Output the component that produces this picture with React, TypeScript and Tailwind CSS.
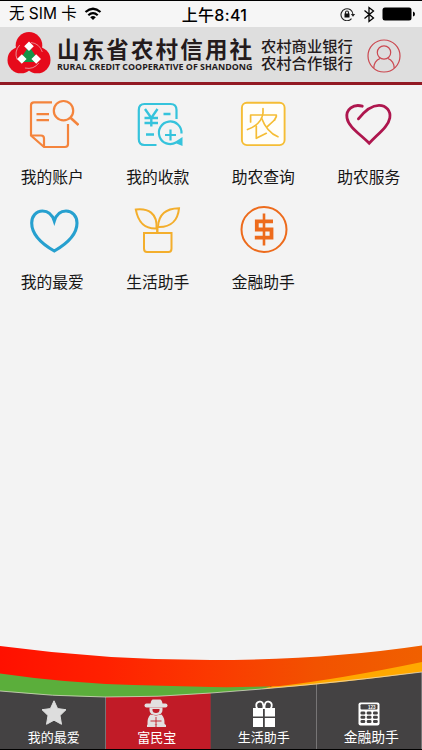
import { useState, type ReactNode } from "react";
import clsx from "clsx";

const menuItems: { label: string; icon: ReactNode }[] = [
  { label: "我的账户", icon: <AccountIcon /> },
  { label: "我的收款", icon: <ReceiptIcon /> },
  { label: "助农查询", icon: <FarmQueryIcon /> },
  { label: "助农服务", icon: <FarmServiceIcon /> },
  { label: "我的最爱", icon: <HeartIcon /> },
  { label: "生活助手", icon: <PlantIcon /> },
  { label: "金融助手", icon: <DollarIcon /> },
];

const tabs: { label: string; icon: ReactNode; style: string }[] = [
  { label: "我的最爱", icon: <StarIcon />, style: "pl-[3px] text-[13px]" },
  { label: "富民宝", icon: <FarmerIcon />, style: "pr-[2px] text-[13px]" },
  { label: "生活助手", icon: <GiftIcon />, style: "pl-[1px] text-[13px]" },
  { label: "金融助手", icon: <CalculatorIcon />, style: "pl-[5px] text-[13.800px]" },
];

function AccountIcon() {
  return (
    <svg viewBox="0 0 52 52" className="w-[52px] h-[52px]" fill="none" stroke="#f4843c" strokeWidth="2.200">
      <path d="M25 3.300H7Q4 3.300 4 6.300V36.500L17 48H38Q41 48 41 45V25" />
      <path d="M4 36.500H14Q17 36.500 17 39.500V48" />
      <path d="M9.500 15.200H22M9.500 21.200H22" />
      <circle cx="36.500" cy="11.700" r="9.700" />
      <path d="M43.500 18.700L51.500 26" strokeWidth="2.600" />
    </svg>
  );
}

function ReceiptIcon() {
  return (
    <svg viewBox="0 0 52 52" className="w-[52px] h-[52px]" fill="none" stroke="#35c3dc" strokeWidth="2.200">
      <path d="M24.500 46H12.500Q6.800 46 6.800 40V11Q6.800 5 12.500 5H38.500Q44.500 5 44.500 11V20" />
      <path d="M13 10L19.300 19L25.500 10M12.500 19H26M12.500 24H26M19.300 19V27.500" strokeWidth="2.400" />
      <path d="M31.500 15H38.500M14 35.500H22" strokeWidth="2.400" />
      <path d="M44 43.500A11.300 11.300 0 1 1 49.500 34.500" />
      <path d="M38.500 30.500V41.500M33 36H44" />
      <path d="M50.500 38V47L42 43.500Z" fill="#35c3dc" stroke="none" />
    </svg>
  );
}

function FarmQueryIcon() {
  return (
    <svg viewBox="0 0 52 52" className="w-[52px] h-[52px]" fill="none" stroke="#f5bd35" strokeWidth="1.900">
      <rect x="3.900" y="3.800" width="42.700" height="42.300" rx="5" fill="#fffefa" />
      <g strokeWidth="1.700" strokeLinecap="round" strokeLinejoin="round">
        <path d="M25 9.500V14Q23.500 25.500 9.500 30.500" />
        <path d="M12.600 23V16H38.300V17.500L36.500 21" />
        <path d="M18.300 27V39.300L28.300 34.300" />
        <path d="M23.500 19Q29 33.500 40 37.700" />
        <path d="M36.500 21L29.300 27.700" />
      </g>
    </svg>
  );
}

function FarmServiceIcon() {
  return (
    <svg viewBox="0 0 52 52" className="w-[52px] h-[52px]" fill="none" stroke="#ae164e" strokeWidth="2.800" strokeLinecap="round">
      <path d="M15.400 19.800C20 14 28 6.300 36 6.300C43.500 6.300 48 12.500 46.800 19C45.500 27 36 34 26.200 44.300C17 35 5.500 28 4 19C2.500 10.500 10.500 4.500 19.300 7.200" />
    </svg>
  );
}

function HeartIcon() {
  return (
    <svg viewBox="0 0 52 52" className="w-[52px] h-[52px]" fill="none" stroke="#26a0cf" strokeWidth="3.100">
      <path d="M27.300 17C25 10 21 7 15.500 7C9 7 4.700 12.500 4.700 19C4.700 31 15 40 27.300 47C39.500 40 50 31 50 19C50 12.500 45.500 7 39 7C33.500 7 29.500 10 27.300 17Z" />
    </svg>
  );
}

function PlantIcon() {
  return (
    <svg viewBox="0 0 52 52" className="w-[52px] h-[52px]" fill="none" stroke="#f3ae2c" strokeWidth="2">
      <path d="M24.500 24.500C11 25 6 17 3.800 5.500C16 4 25.500 9 24.500 24.500Z" />
      <path d="M26 23C26.500 10 34 4.500 47 4.300C46 15 40 23.500 26 23Z" />
      <path d="M25.300 23V29.500" strokeWidth="2.400" />
      <path d="M12 29H39.500V44.500Q39.500 48 36.500 48H15Q12 48 12 44.500Z" />
    </svg>
  );
}

function DollarIcon() {
  return (
    <svg viewBox="0 0 52 52" className="w-[52px] h-[52px]" fill="none" stroke="#ed6b1c">
      <circle cx="26" cy="25.500" r="22.500" strokeWidth="2" />
      <path d="M35 17.300H18.800V25.500H33.500V33.700H16.800" strokeWidth="3.800" />
      <path d="M26 9.500V41.500" strokeWidth="2.600" />
    </svg>
  );
}

function StarIcon() {
  return (
    <svg viewBox="0 0 28 28" className="ml-[3px] w-7 h-7" fill="#ddd" stroke="#ddd" strokeWidth="1" strokeLinejoin="round">
      <path d="M14 0.800L17.600 8.600L26 9.700L20 15.500L21.500 24.300L14 20.200L6.500 24.300L8 15.500L2 9.700L10.400 8.600Z" />
    </svg>
  );
}

function FarmerIcon() {
  return (
    <svg viewBox="0 0 28 30" className="mr-[3px] w-7 h-[30px]" fill="#e3e0e0">
      <path d="M8.500 6Q9 1.500 11 1.500H18Q20 1.500 20.500 6Z" />
      <rect x="2.500" y="5.500" width="23" height="4" rx="2" />
      <path fillRule="evenodd" d="M7.500 9.500H20.500V12Q20.500 17 14 17Q7.500 17 7.500 12ZM10.500 11V12.500Q11 15 14 15Q17 15 17.500 12.500V11Z" />
      <path d="M8.500 16.500L14 17.500L19.500 16.500Q23 20 22.500 26.500H5.500Q5 20 8.500 16.500Z" />
      <path d="M5 27Q7 24 13.500 26.500V29H5ZM14.500 26.500Q21 24 24 27V29H14.500Z" />
      <path d="M14 19V27M8.500 23H19.500" stroke="#c11b27" strokeWidth="0.900" />
    </svg>
  );
}

function GiftIcon() {
  return (
    <svg viewBox="0 0 28 28" className="ml-[2px] w-7 h-7" fill="#fff">
      <path d="M3 8H13V16.500H3ZM14.800 8H25V16.500H14.800ZM3 18H13V27H3ZM14.800 18H25V27H14.800Z" />
      <path d="M13.300 9C14 3 12 1.200 9.500 1.700C5.500 2.700 5.500 6 7.500 9M14.700 9C14 3 16 1.200 18.500 1.700C22.500 2.700 22.500 6 20.500 9" fill="none" stroke="#fff" strokeWidth="1.800" />
    </svg>
  );
}

function CalculatorIcon() {
  return (
    <svg viewBox="0 0 28 28" className="ml-[1px] w-7 h-7">
      <rect x="3.500" y="2.500" width="21" height="23" rx="2" fill="#fff" />
      <rect x="5.500" y="4.200" width="17" height="5.200" rx="1" fill="#444243" />
      <text x="13" y="8.500" fill="#fff" fontSize="4.500" fontWeight="700" fontFamily="Liberation Sans, sans-serif">123</text>
      <g fill="#444243">
        {[11.5, 15.7, 20].map((y) =>
          [5.5, 11.7, 18].map((x) => <rect key={`${x}-${y}`} x={x} y={y} width="4.800" height="3" rx="1.300" />)
        )}
      </g>
    </svg>
  );
}

// three interlocking petals, each one separated by the same curve turned 120deg
function BankLogo() {
  return (
    <svg viewBox="0 0 44 43" className="w-11 h-[43px] shrink-0">
      <g fill="#e60a1b">
        <circle cx="22" cy="14.300" r="13.300" />
        <circle cx="13.800" cy="29" r="13.300" />
        <circle cx="30.200" cy="29" r="13.300" />
      </g>
      <g fill="none" stroke="#eadede" strokeOpacity="0.800" strokeWidth="0.700">
        {[0, 120, 240].map((angle) => (
          <path key={angle} d="M24 11.500Q32.500 12.500 35.300 21" transform={`rotate(${angle} 22 24)`} />
        ))}
      </g>
      <path d="M22 15L30 27L28 31H16L14 27Z" fill="#149548" />
      <path d="M22 10.500L26.800 15.300L22 20.100L17.200 15.300ZM14.800 23.200L19.600 28L14.800 32.800L10 28ZM29.200 23.200L34 28L29.200 32.800L24.400 28Z" fill="#fff" />
    </svg>
  );
}

function StatusBar() {
  return (
    <div className="grid grid-cols-3 items-center h-[27px] border-t border-black bg-[#f6f6f6] font-['Inter','Noto_Sans_CJK_SC',sans-serif] text-black">
      <div className="flex items-center gap-[7px] pl-[9px] text-[15.500px] whitespace-nowrap">
        <span className="w-[68px]">无 SIM 卡</span>
        <svg viewBox="0 0 18 14" className="w-[18px] h-[14px]" fill="none" stroke="#000" strokeWidth="2.200">
          <path d="M1.500 5Q9 -1.500 16.500 5M4.300 8.300Q9 4 13.700 8.300" />
          <path d="M6.200 10.200Q9 8 11.800 10.200L9 13Z" fill="#000" stroke="none" />
        </svg>
      </div>
      <div className="pl-[7px] pt-[2px] text-center text-[16px] font-medium tracking-[0.300px] whitespace-nowrap">上午8:41</div>
      <div className="flex items-center justify-end gap-[7px] pr-[7px]">
        <svg viewBox="0 0 16 14" className="w-4 h-[14px]" fill="none" stroke="#222" strokeWidth="1.100">
          <path d="M11.500 11.700A6 6 0 1 1 13 7.500" />
          <path d="M10.800 7H15.200L13 9.800Z" fill="#222" stroke="none" />
          <path d="M5.500 7V5.500A1.500 1.500 0 0 1 8.500 5.500V7" />
          <rect x="4.500" y="6.500" width="5" height="4" fill="#111" stroke="none" />
        </svg>
        <svg viewBox="0 0 12 17" className="w-3 h-[17px]" fill="none" stroke="#000" strokeWidth="1.300">
          <path d="M1.500 4.500L10.500 12L6 15.500V1.500L10.500 5L1.500 12.500" />
        </svg>
        <svg viewBox="0 0 33 14" className="w-[33px] h-[14px]">
          <rect x="0.500" y="0.500" width="29" height="13" rx="2.500" fill="#000" />
          <path d="M31 4.500Q33 5 33 7T31 9.500Z" fill="#000" />
        </svg>
      </div>
    </div>
  );
}

function Header() {
  return (
    <header className="flex h-[58px] border-b-[3px] border-[#921923] bg-[#dedede] pl-[7px] pt-[4px] text-[#241b1c]">
      <BankLogo />
      <div className="ml-[6px] w-[197px] shrink-0 pt-[8px] whitespace-nowrap">
        <div className="text-[22.500px] font-bold leading-[23px] tracking-[2.150px]">山东省农村信用社</div>
        <div className="font-['Open_Sans',sans-serif] text-[8.500px] font-bold leading-[10px]">
          <span className="inline-block origin-left scale-x-[1.045]">RURAL CREDIT COOPERATIVE OF SHANDONG</span>
        </div>
      </div>
      <div className="ml-[7px] shrink-0 pt-[8px] text-[15.300px] font-medium leading-[16.500px] whitespace-nowrap">
        <div>农村商业银行</div>
        <div>农村合作银行</div>
      </div>
      <svg viewBox="0 0 34 34" className="ml-[14px] mt-[8px] w-[34px] h-[34px]" fill="none" stroke="#cb4850" strokeWidth="1.200">
        <circle cx="17" cy="17" r="16" />
        <circle cx="17" cy="13.500" r="6.700" />
        <path d="M6.800 29Q7 22 13 19.500M21 19.500Q27 22 27.200 29" />
      </svg>
    </header>
  );
}

function Waves() {
  return (
    <svg viewBox="0 0 422 105" className="absolute left-0 top-0 w-full h-[105px] pointer-events-none">
      <defs>
        <linearGradient id="ribbon" x1="0" x2="1" y1="0" y2="0">
          <stop offset="0" stopColor="#ff1000" />
          <stop offset="0.250" stopColor="#ff2100" />
          <stop offset="0.500" stopColor="#fb3900" />
          <stop offset="0.750" stopColor="#f25200" />
          <stop offset="1" stopColor="#f06000" />
        </linearGradient>
      </defs>
      <path d="M0 27H270V43.500Q240 45.500 211 48Q105 57 0 46Z" fill="#5bae3b" />
      <path d="M262 44L290 36L422 12V27Q340 38.500 262 44Z" fill="#ffa800" />
      <path d="M0 1Q105 15 211 15Q325 15 422 0.500V17Q340 34 280 41Q240 42.500 211 42L133 40Q65 38 0 28.500Z" fill="url(#ribbon)" />
      <path d="M0 46Q105 57 211 48Q310 41 422 27" fill="none" stroke="#e5dfd2" strokeOpacity="0.800" strokeWidth="0.900" />
    </svg>
  );
}

export default function App() {
  const [activeTab, setActiveTab] = useState("富民宝");

  return (
    <div className="flex flex-col w-[422px] h-[750px] overflow-hidden bg-[#f3f3f3] font-['Liberation_Sans','Noto_Sans_CJK_SC',sans-serif]">
      <StatusBar />
      <Header />

      <main className="grid grid-cols-4 content-start flex-1 pt-[14px]">
        {menuItems.map((item) => (
          <button key={item.label} className="flex flex-col items-center h-[105px]">
            {item.icon}
            <span className="mt-[15px] pr-[1px] text-[15.800px] leading-6 text-[#161616]">{item.label}</span>
          </button>
        ))}
      </main>

      <footer className="relative flex items-end h-[105px] border-b border-black">
        {tabs.map((tab) => (
          <button
            key={tab.label}
            onClick={() => setActiveTab(tab.label)}
            className={clsx(
              "flex flex-1 flex-col items-center justify-end h-[77px] pb-[1px] border-r last:border-r-0",
              activeTab === tab.label ? "bg-[#c11b27] border-[#8f3038]" : "bg-[#444243] border-[#777576]"
            )}
          >
            {tab.icon}
            <span className={clsx("leading-5 text-white whitespace-nowrap", tab.style)}>{tab.label}</span>
          </button>
        ))}
        <Waves />
      </footer>
    </div>
  );
}
